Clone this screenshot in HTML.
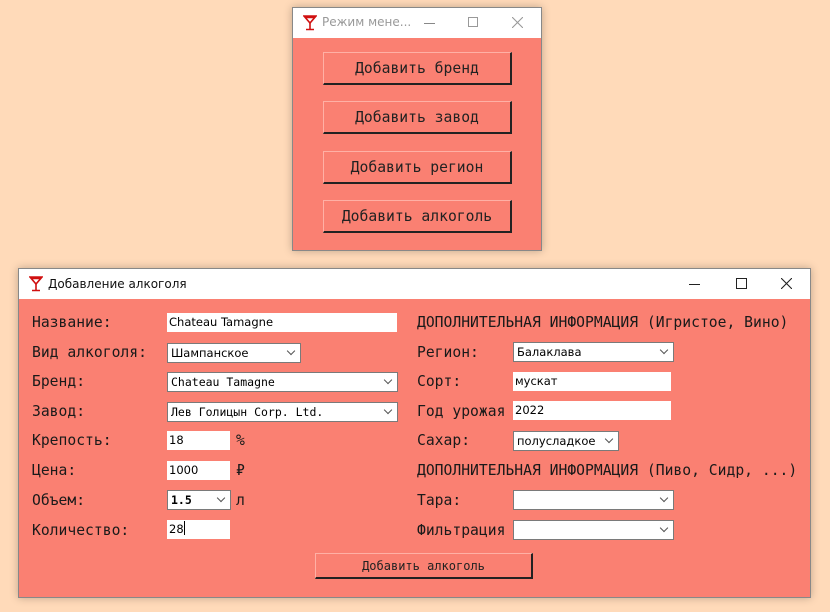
<!DOCTYPE html>
<html><head><meta charset="utf-8"><style>
*{margin:0;padding:0;box-sizing:border-box}
body{width:830px;height:612px;background:#FFDAB9;position:relative;overflow:hidden;font-family:"DejaVu Sans Mono","Liberation Mono",monospace}
.a{position:absolute}
.win{position:absolute;background:#FA8072;border:1px solid #888;box-shadow:0 0 8px rgba(0,0,0,.25)}
.tb{position:absolute;left:0;top:0;right:0;height:30px;background:#fff}
.lbl{position:absolute;font-size:14.7px;color:#1a1a1a;white-space:nowrap;line-height:18px;margin-top:1px}
.btn{position:absolute;background:#FA8072;border-top:1px solid #ffb0a5;border-left:1px solid #ffb0a5;border-right:2px solid #222;border-bottom:2px solid #222;font-size:14.7px;color:#222;text-align:center}
.en{position:absolute;background:#fff;height:19px;font-family:"DejaVu Sans","Liberation Sans",sans-serif;font-size:11.5px;line-height:19px;padding-left:2px;color:#000;white-space:nowrap}
.cb{position:absolute;background:#fff;border:1px solid #7a7a7a;height:20px;font-size:11.5px;line-height:18px;padding-left:3px;color:#000;white-space:nowrap}
.cb.s{font-family:"DejaVu Sans","Liberation Sans",sans-serif;font-size:11.5px}
.cb::after{content:"";position:absolute;right:6px;top:4px;width:5px;height:5px;border-right:1px solid #555;border-bottom:1px solid #555;transform:rotate(45deg)}
</style></head><body>

<div class="win" style="left:292px;top:7px;width:250px;height:244px">
 <div class="tb">
  <svg class="a" style="left:10px;top:7px" width="14" height="16" viewBox="0 0 14 16"><path d="M1 1H13L7 8Z M2 2.5H12" fill="none" stroke="#d01010" stroke-width="1.6"/><path d="M7 8V14M3 14.5H11" stroke="#d01010" stroke-width="1.6"/></svg>
  <div class="a" style="left:29px;top:7px;font-family:'DejaVu Sans','Liberation Sans',sans-serif;font-size:12px;color:#999">Режим мене...</div>
  <div class="a" style="left:131px;top:15px;width:11px;height:1px;background:#888"></div>
  <div class="a" style="left:175px;top:9px;width:10px;height:10px;border:1px solid #999"></div>
  <svg class="a" style="left:219px;top:9px" width="11" height="11"><path d="M0 0L11 11M11 0L0 11" stroke="#999" stroke-width="1.1"/></svg>
 </div>
 <div class="btn" style="left:30px;top:44px;width:189px;height:33px;line-height:32px">Добавить бренд</div>
 <div class="btn" style="left:30px;top:93px;width:189px;height:33px;line-height:32px">Добавить завод</div>
 <div class="btn" style="left:30px;top:143px;width:189px;height:33px;line-height:32px">Добавить регион</div>
 <div class="btn" style="left:30px;top:192px;width:189px;height:33px;line-height:32px">Добавить алкоголь</div>
</div>

<div class="win" style="left:18px;top:268px;width:793px;height:330px">
 <div class="tb">
  <svg class="a" style="left:10px;top:7px" width="14" height="16" viewBox="0 0 14 16"><path d="M1 1H13L7 8Z M2 2.5H12" fill="none" stroke="#d01010" stroke-width="1.6"/><path d="M7 8V14M3 14.5H11" stroke="#d01010" stroke-width="1.6"/></svg>
  <div class="a" style="left:29px;top:8px;font-family:'DejaVu Sans','Liberation Sans',sans-serif;font-size:12px;color:#111">Добавление алкоголя</div>
  <div class="a" style="left:670px;top:15px;width:11px;height:1px;background:#222"></div>
  <div class="a" style="left:717px;top:9px;width:11px;height:11px;border:1px solid #222"></div>
  <svg class="a" style="left:762px;top:9px" width="11" height="11"><path d="M0 0L11 11M11 0L0 11" stroke="#222" stroke-width="1.1"/></svg>
 </div>
</div>

<div class="lbl" style="left:32px;top:313px">Название:</div>
<div class="lbl" style="left:32px;top:343px">Вид алкоголя:</div>
<div class="lbl" style="left:32px;top:372px">Бренд:</div>
<div class="lbl" style="left:32px;top:402px">Завод:</div>
<div class="lbl" style="left:32px;top:431px">Крепость:</div>
<div class="lbl" style="left:32px;top:461px">Цена:</div>
<div class="lbl" style="left:32px;top:491px">Объем:</div>
<div class="lbl" style="left:32px;top:521px">Количество:</div>

<div class="en" style="left:167px;top:313px;width:230px">Chateau Tamagne</div>
<div class="cb s" style="left:167px;top:343px;width:134px">Шампанское</div>
<div class="cb" style="left:167px;top:372px;width:231px">Chateau Tamagne</div>
<div class="cb" style="left:167px;top:402px;width:231px">Лев Голицын Corp. Ltd.</div>
<div class="en" style="left:167px;top:431px;width:63px">18</div>
<div class="lbl" style="left:236px;top:431px">%</div>
<div class="en" style="left:167px;top:461px;width:63px">1000</div>
<div class="lbl" style="left:236px;top:461px">₽</div>
<div class="cb" style="left:167px;top:490px;width:64px;font-weight:bold">1.5</div>
<div class="lbl" style="left:236px;top:491px">л</div>
<div class="en" style="left:167px;top:520px;width:63px">28<span style="display:inline-block;width:1px;height:14px;background:#000;vertical-align:-2px"></span></div>

<div class="lbl" style="left:417px;top:313px">ДОПОЛНИТЕЛЬНАЯ ИНФОРМАЦИЯ (Игристое, Вино)</div>
<div class="lbl" style="left:417px;top:343px">Регион:</div>
<div class="lbl" style="left:417px;top:372px">Сорт:</div>
<div class="lbl" style="left:417px;top:402px">Год урожая</div>
<div class="lbl" style="left:417px;top:431px">Сахар:</div>
<div class="lbl" style="left:417px;top:461px">ДОПОЛНИТЕЛЬНАЯ ИНФОРМАЦИЯ (Пиво, Сидр, ...)</div>
<div class="lbl" style="left:417px;top:491px">Тара:</div>
<div class="lbl" style="left:417px;top:521px">Фильтрация</div>

<div class="cb s" style="left:513px;top:342px;width:161px">Балаклава</div>
<div class="en" style="left:513px;top:372px;width:158px">мускат</div>
<div class="en" style="left:513px;top:401px;width:158px">2022</div>
<div class="cb s" style="left:513px;top:431px;width:106px">полусладкое</div>
<div class="cb" style="left:513px;top:490px;width:161px"></div>
<div class="cb" style="left:513px;top:520px;width:161px"></div>

<div class="btn" style="left:315px;top:553px;width:218px;height:26px;line-height:24px;font-size:12px">Добавить алкоголь</div>

</body></html>
